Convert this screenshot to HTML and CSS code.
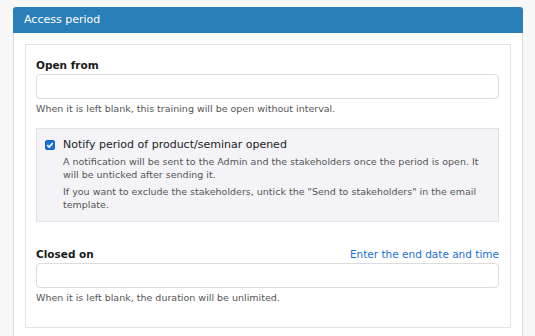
FILE: index.html
```html
<!DOCTYPE html>
<html>
<head>
<meta charset="utf-8">
<link rel="stylesheet" href="styles.css">
</head>
<body>
<div class="panel">
  <div class="panel-head">Access period</div>
  <div class="panel-body">
    <div class="card">
      <div class="field">
        <div class="label-row"><label class="label">Open from</label></div>
        <div class="input"></div>
        <p class="help">When it is left blank, this training will be open without interval.</p>
      </div>
      <div class="notify">
        <span class="check"><svg viewBox="0 0 10 10" width="10" height="10"><rect x="0.5" y="0.5" width="9" height="9" rx="1.5" fill="#1a6fd8" stroke="#1a5fc0"/><path d="M2.3 5.1 L4.2 7 L7.8 3" fill="none" stroke="#fff" stroke-width="1.6"/></svg></span>
        <div class="notify-text">
          <div class="notify-title">Notify period of product/seminar opened</div>
          <p class="note">A notification will be sent to the Admin and the stakeholders once the period is open. It will be unticked after sending it.</p>
          <p class="note">If you want to exclude the stakeholders, untick the "Send to stakeholders" in the email template.</p>
        </div>
      </div>
      <div class="field closed">
        <div class="label-row"><label class="label">Closed on</label><a class="link">Enter the end date and time</a></div>
        <div class="input"></div>
        <p class="help">When it is left blank, the duration will be unlimited.</p>
      </div>
    </div>
  </div>
</div>
</body>
</html>
```
FILE: styles.css
```css
html, body { margin: 0; padding: 0; }
body {
  background: #f7f7f7;
  font-family: "DejaVu Sans", Verdana, sans-serif;
  color: #222;
  width: 535px;
  height: 336px;
  overflow: hidden;
}
.panel {
  margin: 7px 12px 0 13px;
  background: #fff;
  border: 1px solid #dcdcdc;
  border-top: 0;
  border-radius: 3px 3px 0 0;
  height: 340px;
}
.panel-head {
  background: #2b7fb8;
  color: #fff;
  height: 26px;
  line-height: 25px;
  padding-left: 11px;
  font-size: 11px;
  border-radius: 3px 3px 0 0;
  margin: 0 -1px;
}
.panel-body { padding: 11px 11px 0 11px; }
.card {
  border: 1px solid #e3e3e3;
  padding: 8px 11px 23px 10px;
}
.label-row {
  display: flex;
  justify-content: space-between;
  align-items: flex-end;
  height: 18px;
}
.label {
  font-weight: bold;
  font-size: 10.5px;
  color: #1a1a1a;
}
.link {
  color: #1a6fd8;
  font-size: 10.5px;
}
.input {
  height: 23px;
  border: 1px solid #dcdcdc;
  border-radius: 4px;
  margin-top: 3px;
  background: #fff;
}
.help {
  margin: 3px 0 0 0;
  font-size: 9.5px;
  color: #555;
  line-height: 13px;
}
.notify {
  margin-top: 13px;
  background: #f3f3f8;
  border: 1px solid #e2e2e6;
  display: flex;
  padding: 8px 10px 10px 8px;
  gap: 8px;
}
.check { padding-top: 3px; height: 10px; }
.check svg { display: block; }
.notify-title {
  font-size: 11px;
  color: #222;
  line-height: 15px;
}
.note {
  margin: 3px 0 4px 0;
  font-size: 9.5px;
  color: #555;
  line-height: 13px;
}
.note + .note { margin-top: 0; }
.note:last-child { margin-bottom: 0; }
.closed { margin-top: 20px; }
```
